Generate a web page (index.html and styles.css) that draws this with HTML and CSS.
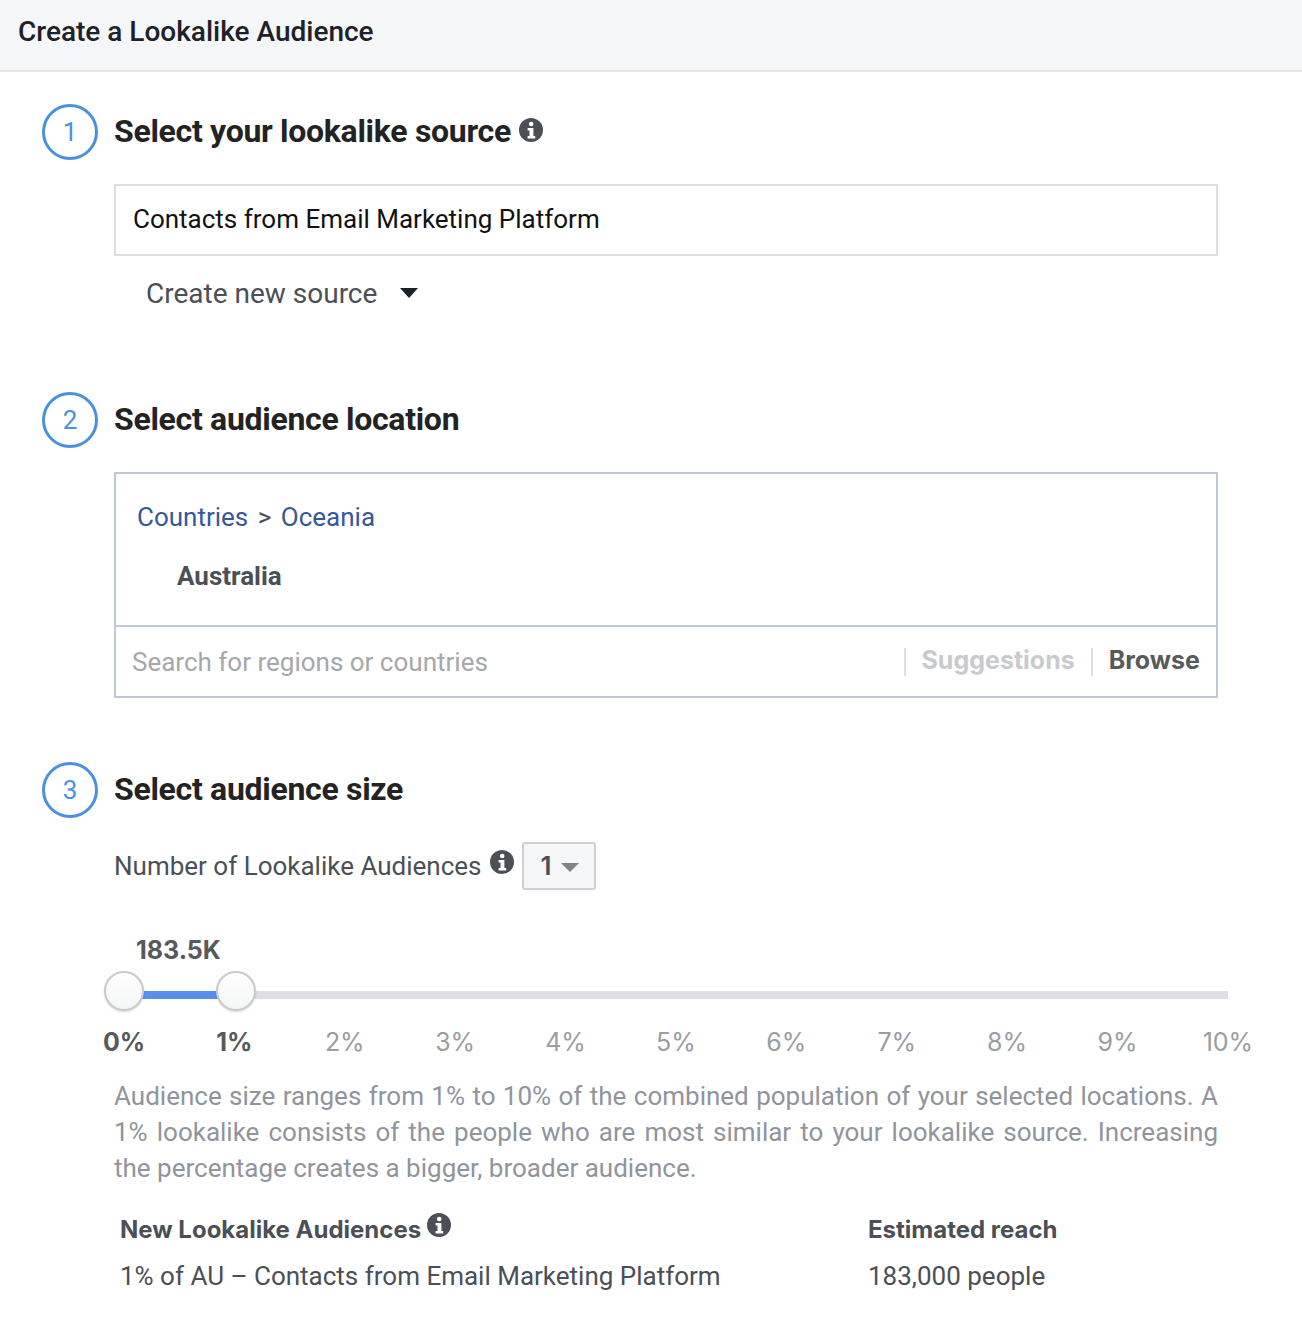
FILE: index.html
```html
<!DOCTYPE html>
<html lang="en">
<head>
    <meta charset="UTF-8">
    <title>Create a Lookalike Audience</title>
    <link rel="stylesheet" href="styles.css">
</head>
<body>

    <svg class="icon-defs" width="0" height="0">
        <symbol id="info" viewBox="0 0 24 24">
            <circle cx="12" cy="12" r="12" fill="currentColor"/>
            <circle cx="12.2" cy="6" r="2.3" fill="#fff"/>
            <path d="M8.6 10h5.8v8h1.8v2.4H8.6V18h1.9v-5.6H8.6z" fill="#fff"/>
        </symbol>
    </svg>

    <!-- Header -->
    <div class="header">Create a Lookalike Audience</div>

    <!-- Step 1 -->
    <div class="step step-source">
        <div class="step-title">
            <div class="step-num">1</div>
            <h2>Select your lookalike source</h2>
            <svg class="info info-title"><use href="#info"/></svg>
        </div>
        <div class="step-body">
            <div class="source-box">Contacts from Email Marketing Platform</div>
            <div class="new-source">
                <span>Create new source</span>
                <span class="caret-dark"></span>
            </div>
        </div>
    </div>

    <!-- Step 2 -->
    <div class="step step-location">
        <div class="step-title">
            <div class="step-num">2</div>
            <h2>Select audience location</h2>
        </div>
        <div class="step-body">
            <div class="location-box">
                <div class="location-list">
                    <div class="crumbs"><a>Countries</a> <span class="sep">&gt;</span> <a>Oceania</a></div>
                    <div class="country">Australia</div>
                </div>
                <div class="location-search">
                    <div class="placeholder">Search for regions or countries</div>
                    <div class="tab tab-off">Suggestions</div>
                    <div class="tab tab-on">Browse</div>
                </div>
            </div>
        </div>
    </div>

    <!-- Step 3 -->
    <div class="step step-size">
        <div class="step-title">
            <div class="step-num">3</div>
            <h2>Select audience size</h2>
        </div>
        <div class="step-body">
            <div class="number-row">
                <span>Number of Lookalike Audiences</span>
                <svg class="info info-number"><use href="#info"/></svg>
                <div class="number-select">1<span class="caret-grey"></span></div>
            </div>
            <div class="slider-value">183.5K</div>
            <div class="slider">
                <div class="slider-fill"></div>
                <div class="thumb thumb-start"></div>
                <div class="thumb thumb-end"></div>
            </div>
            <div class="ticks">
                <span class="tick-on">0%</span>
                <span class="tick-on">1%</span>
                <span>2%</span>
                <span>3%</span>
                <span>4%</span>
                <span>5%</span>
                <span>6%</span>
                <span>7%</span>
                <span>8%</span>
                <span>9%</span>
                <span>10%</span>
            </div>
            <p class="help">Audience size ranges from 1% to 10% of the combined population of your selected locations. A 1% lookalike consists of the people who are most similar to your lookalike source. Increasing the percentage creates a bigger, broader audience.</p>
            <div class="result">
                <div class="result-name">
                    <div class="result-head">New Lookalike Audiences <svg class="info info-result"><use href="#info"/></svg></div>
                    <div class="result-text">1% of AU &ndash; Contacts from Email Marketing Platform</div>
                </div>
                <div class="result-reach">
                    <div class="result-head">Estimated reach</div>
                    <div class="result-text">183,000 people</div>
                </div>
            </div>
        </div>
    </div>

</body>
</html>
```

FILE: styles.css
```css
/* Global Styles */
body {
    margin: 0;
    background: #fff;
    font-family: Roboto, Arial, sans-serif;
    color: #4b4f56;
    overflow: hidden;
}

.icon-defs {
    position: absolute;
}

/* Header */
.header {
    height: 70px;
    padding-left: 18px;
    background: #f5f6f7;
    border-bottom: 2px solid #e5e6e8;
    color: #1d2129;
    font-size: 28px;
    font-weight: 500;
    line-height: 64px;
}

/* Steps */
.step {
    padding-left: 42px;
    width: 1176px;
}

.step-source {
    padding-top: 32px;
    height: 288px;
}

.step-location {
    height: 370px;
}

.step-title {
    display: flex;
    align-items: center;
    height: 56px;
}

.step-num {
    box-sizing: border-box;
    width: 56px;
    height: 56px;
    margin-right: 16px;
    border: 3px solid #4a90e2;
    border-radius: 50%;
    color: #4a90e2;
    font-size: 26px;
    line-height: 51px;
    text-align: center;
}

.step-title h2 {
    margin: 0 8px 0 0;
    color: #232323;
    font-size: 32px;
    font-weight: 700;
    letter-spacing: -0.3px;
    position: relative;
    top: -1px;
}

.step-body {
    margin-left: 72px;
    width: 1104px;
}

.info {
    display: inline-block;
    color: #4b4f56;
}

.info-title {
    width: 24px;
    height: 24px;
    position: relative;
    top: -2px;
}

/* Step 1 */
.source-box {
    box-sizing: border-box;
    height: 72px;
    margin-top: 24px;
    padding-left: 17px;
    border: 2px solid #dddfe2;
    color: #111;
    font-size: 26px;
    line-height: 67px;
}

.new-source {
    display: flex;
    align-items: center;
    height: 74px;
    padding-left: 32px;
    font-size: 28px;
}

.caret-dark {
    width: 0;
    height: 0;
    margin-left: 23px;
    border-left: 9px solid transparent;
    border-right: 9px solid transparent;
    border-top: 10px solid #1d2129;
}

/* Step 2 */
.location-box {
    box-sizing: border-box;
    height: 226px;
    margin-top: 24px;
    border: 2px solid #bec7d6;
}

.location-list {
    box-sizing: border-box;
    height: 153px;
    padding: 28px 0 0 21px;
    border-bottom: 2px solid #bec7d6;
    font-size: 26px;
}

.crumbs a {
    color: #365899;
}

.crumbs .sep {
    margin: 0 3px;
    color: #4b4f56;
}

.country {
    margin: 29px 0 0 40px;
    font-weight: 700;
}

.location-search {
    display: flex;
    align-items: center;
    height: 69px;
}

.placeholder {
    flex: 1;
    padding-left: 16px;
    color: #a5a7ab;
    font-size: 26px;
}

.tab {
    height: 28px;
    padding: 0 16px;
    border-left: 2px solid #dddfe2;
    font-family: Inter, Arial, sans-serif;
    font-size: 25px;
    font-weight: 700;
    line-height: 24px;
}

.tab-off {
    color: #c8cacd;
}

.tab-on {
    color: #58595b;
}

/* Step 3 */
.number-row {
    display: flex;
    align-items: center;
    height: 48px;
    margin-top: 24px;
    font-size: 26px;
}

.info-number {
    width: 24px;
    height: 24px;
    margin-left: 8px;
    position: relative;
    top: -4px;
}

.number-select {
    box-sizing: border-box;
    width: 74px;
    height: 48px;
    margin-left: 8px;
    padding-left: 17px;
    background: #f5f6f7;
    border: 2px solid #ced0d4;
    border-radius: 3px;
    color: #4b4f56;
    font-family: Inter, Arial, sans-serif;
    font-size: 26px;
    font-weight: 600;
    line-height: 44px;
}

.caret-grey {
    display: inline-block;
    width: 0;
    height: 0;
    margin-left: 9px;
    border-left: 9px solid transparent;
    border-right: 9px solid transparent;
    border-top: 9px solid #7f8288;
    vertical-align: 3px;
}

.slider-value {
    margin: 45px 0 0 22px;
    color: #58595b;
    font-family: Inter, Arial, sans-serif;
    font-size: 25px;
    font-weight: 700;
    line-height: 30px;
}

.slider {
    position: relative;
    height: 8px;
    width: 1104px;
    margin: 26px 0 0 10px;
    background: #dddfe4;
}

.slider-fill {
    position: absolute;
    left: 0;
    top: 0;
    width: 112px;
    height: 8px;
    background: #5b8def;
}

.thumb {
    position: absolute;
    top: -20px;
    box-sizing: border-box;
    width: 40px;
    height: 40px;
    background: linear-gradient(#fff, #f4f5f6);
    border: 2px solid #c9cacc;
    border-radius: 50%;
    box-shadow: 0 1px 2px rgba(0, 0, 0, 0.15);
}

.thumb-start {
    left: -20px;
}

.thumb-end {
    left: 92px;
}

.ticks {
    display: flex;
    justify-content: space-between;
    width: 1164px;
    margin: 28px 0 0 -20px;
    font-family: Inter, Arial, sans-serif;
    font-size: 25px;
    line-height: 30px;
    color: #9a9da1;
}

.ticks span {
    width: 60px;
    text-align: center;
}

.ticks .tick-on {
    color: #58595b;
    font-weight: 700;
}

.help {
    margin: 21px 0 0;
    color: #90949c;
    font-size: 26px;
    line-height: 36px;
    text-align: justify;
}

/* Result table */
.result {
    display: flex;
    margin: 24px 0 0 6px;
}

.result-name {
    width: 748px;
}

.result-head {
    height: 44px;
    font-family: Inter, Arial, sans-serif;
    font-size: 24px;
    font-weight: 700;
    line-height: 40px;
    color: #4b4f56;
}

.result-text {
    font-size: 26px;
    line-height: 44px;
}

.info-result {
    width: 24px;
    height: 24px;
    vertical-align: 1px;
}
```
